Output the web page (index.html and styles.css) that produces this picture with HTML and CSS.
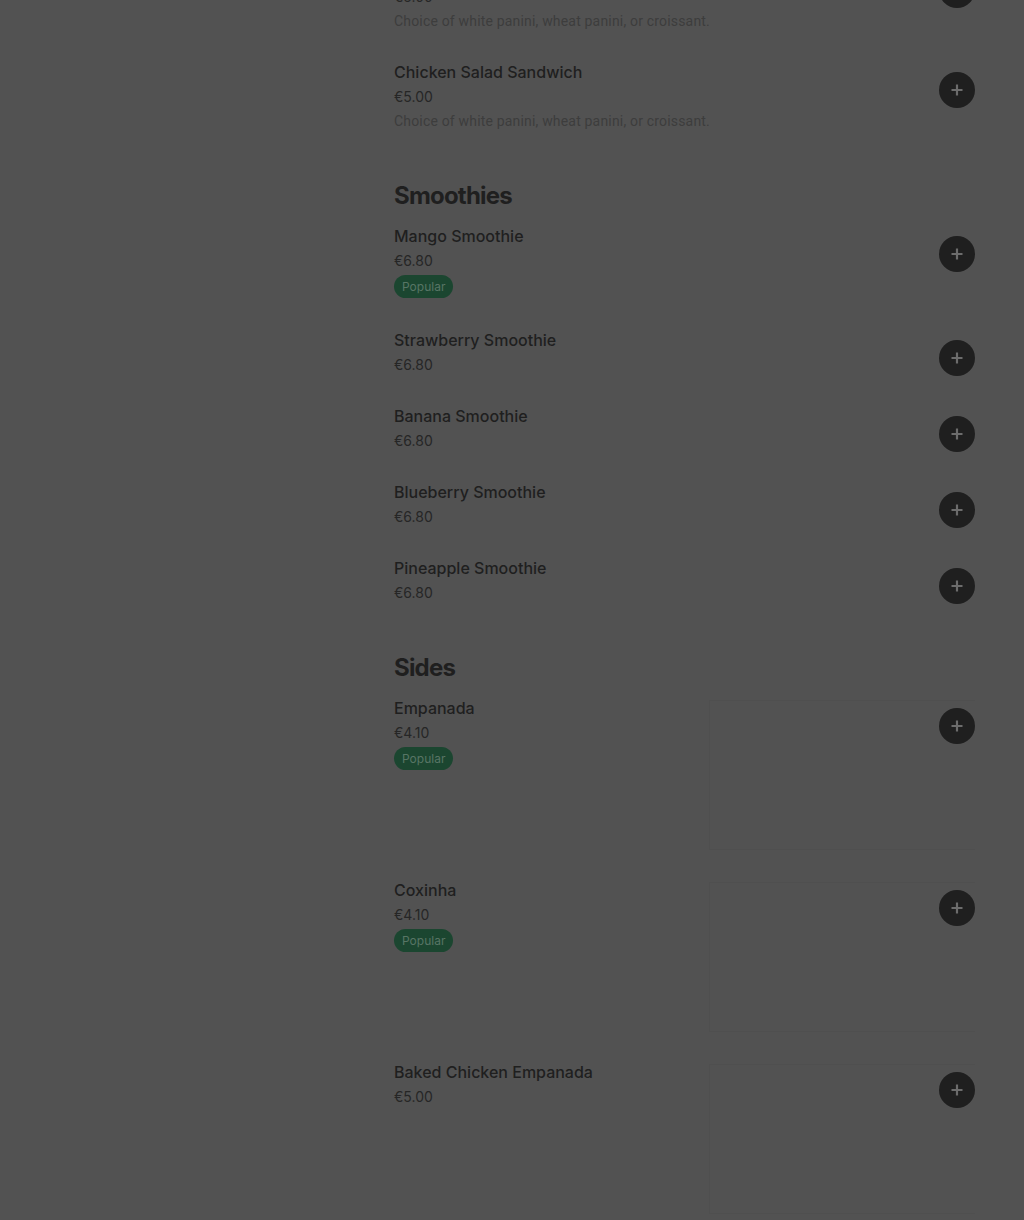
FILE: index.html
```html
<!DOCTYPE html>
<html lang="en">
<head>
<meta charset="utf-8">
<title>Menu</title>
<link rel="stylesheet" href="styles.css">
</head>
<body>
<div class="layout">
  <aside class="aside"></aside>
  <main class="menu">
    <section class="section first">
      <div class="item">
        <div class="info">
          <div class="name">Ham &amp; Cheese Sandwich</div>
          <div class="price">€5.00</div>
          <div class="desc">Choice of white panini, wheat panini, or croissant.</div>
        </div>
        <button class="add" aria-label="Add"><svg viewBox="0 0 16 16" width="16" height="16"><path d="M8 2.5v11M2.5 8h11" stroke="currentColor" stroke-width="2.2" fill="none"/></svg></button>
      </div>
      <div class="item">
        <div class="info">
          <div class="name">Chicken Salad Sandwich</div>
          <div class="price">€5.00</div>
          <div class="desc">Choice of white panini, wheat panini, or croissant.</div>
        </div>
        <button class="add" aria-label="Add"><svg viewBox="0 0 16 16" width="16" height="16"><path d="M8 2.5v11M2.5 8h11" stroke="currentColor" stroke-width="2.2" fill="none"/></svg></button>
      </div>
    </section>

    <section class="section">
      <h2 class="heading">Smoothies</h2>
      <div class="item">
        <div class="info">
          <div class="name">Mango Smoothie</div>
          <div class="price">€6.80</div>
          <div class="badges"><span class="badge">Popular</span></div>
        </div>
        <button class="add" aria-label="Add"><svg viewBox="0 0 16 16" width="16" height="16"><path d="M8 2.5v11M2.5 8h11" stroke="currentColor" stroke-width="2.2" fill="none"/></svg></button>
      </div>
      <div class="item">
        <div class="info">
          <div class="name">Strawberry Smoothie</div>
          <div class="price">€6.80</div>
        </div>
        <button class="add" aria-label="Add"><svg viewBox="0 0 16 16" width="16" height="16"><path d="M8 2.5v11M2.5 8h11" stroke="currentColor" stroke-width="2.2" fill="none"/></svg></button>
      </div>
      <div class="item">
        <div class="info">
          <div class="name">Banana Smoothie</div>
          <div class="price">€6.80</div>
        </div>
        <button class="add" aria-label="Add"><svg viewBox="0 0 16 16" width="16" height="16"><path d="M8 2.5v11M2.5 8h11" stroke="currentColor" stroke-width="2.2" fill="none"/></svg></button>
      </div>
      <div class="item">
        <div class="info">
          <div class="name">Blueberry Smoothie</div>
          <div class="price">€6.80</div>
        </div>
        <button class="add" aria-label="Add"><svg viewBox="0 0 16 16" width="16" height="16"><path d="M8 2.5v11M2.5 8h11" stroke="currentColor" stroke-width="2.2" fill="none"/></svg></button>
      </div>
      <div class="item">
        <div class="info">
          <div class="name">Pineapple Smoothie</div>
          <div class="price">€6.80</div>
        </div>
        <button class="add" aria-label="Add"><svg viewBox="0 0 16 16" width="16" height="16"><path d="M8 2.5v11M2.5 8h11" stroke="currentColor" stroke-width="2.2" fill="none"/></svg></button>
      </div>
    </section>

    <section class="section">
      <h2 class="heading">Sides</h2>
      <div class="item has-image">
        <div class="info">
          <div class="name">Empanada</div>
          <div class="price">€4.10</div>
          <div class="badges"><span class="badge">Popular</span></div>
        </div>
        <div class="thumb"></div>
        <button class="add" aria-label="Add"><svg viewBox="0 0 16 16" width="16" height="16"><path d="M8 2.5v11M2.5 8h11" stroke="currentColor" stroke-width="2.2" fill="none"/></svg></button>
      </div>
      <div class="item has-image">
        <div class="info">
          <div class="name">Coxinha</div>
          <div class="price">€4.10</div>
          <div class="badges"><span class="badge">Popular</span></div>
        </div>
        <div class="thumb"></div>
        <button class="add" aria-label="Add"><svg viewBox="0 0 16 16" width="16" height="16"><path d="M8 2.5v11M2.5 8h11" stroke="currentColor" stroke-width="2.2" fill="none"/></svg></button>
      </div>
      <div class="item has-image">
        <div class="info">
          <div class="name">Baked Chicken Empanada</div>
          <div class="price">€5.00</div>
        </div>
        <div class="thumb"></div>
        <button class="add" aria-label="Add"><svg viewBox="0 0 16 16" width="16" height="16"><path d="M8 2.5v11M2.5 8h11" stroke="currentColor" stroke-width="2.2" fill="none"/></svg></button>
      </div>
    </section>
  </main>
</div>
</body>
</html>
```

FILE: styles.css
```css
html, body {
  margin: 0;
  padding: 0;
  background: #525252;
  height: 1220px;
  overflow: hidden;
}

body {
  font-family: Inter, "Noto Sans", "Liberation Sans", sans-serif;
  color: #1f1f1f;
}

.layout {
  display: flex;
  gap: 24px;
}

.aside {
  flex: 0 0 370px;
}

.menu {
  flex: 0 0 581px;
  width: 581px;
  margin-top: -52px;
}

.section {
  margin-top: 32px;
}

.section.first {
  margin-top: 0;
}

.heading {
  margin: 0;
  font-size: 24px;
  line-height: 32px;
  font-weight: 700;
  color: #1f1f1f;
  letter-spacing: -0.8px;
}

.item {
  position: relative;
  display: flex;
  padding: 12px 0 15px;
}

.item.has-image {
  padding-bottom: 16px;
}

.info {
  flex: 1 1 auto;
  min-width: 0;
}

.name {
  font-size: 16px;
  line-height: 24px;
  font-weight: 500;
  color: #1f1f1f;
}

.price {
  margin-top: 1px;
  font-size: 14px;
  line-height: 24px;
  color: #262626;
}

.desc {
  font-family: Roboto, "Noto Sans", sans-serif;
  font-size: 14px;
  line-height: 24px;
  letter-spacing: 0.18px;
  color: #3d3d3d;
}

.badges {
  display: flex;
  margin: 2px 0 3px;
}

.badge {
  display: inline-block;
  height: 23px;
  line-height: 23px;
  padding: 0 8px;
  border-radius: 12px;
  background: #1b4630;
  color: #587565;
  font-size: 12px;
}

.thumb {
  flex: 0 0 266px;
  height: 150px;
  margin-top: 4px;
  box-sizing: border-box;
  border: 1px solid #4f4f4f;
  border-right: none;
  background: #525252;
}

.add {
  position: absolute;
  top: 24px;
  right: 0;
  width: 36px;
  height: 36px;
  padding: 0;
  border: none;
  border-radius: 50%;
  background: #1f1f1f;
  color: #6c6c6c;
  display: flex;
  align-items: center;
  justify-content: center;
}

.add svg {
  display: block;
}
```
